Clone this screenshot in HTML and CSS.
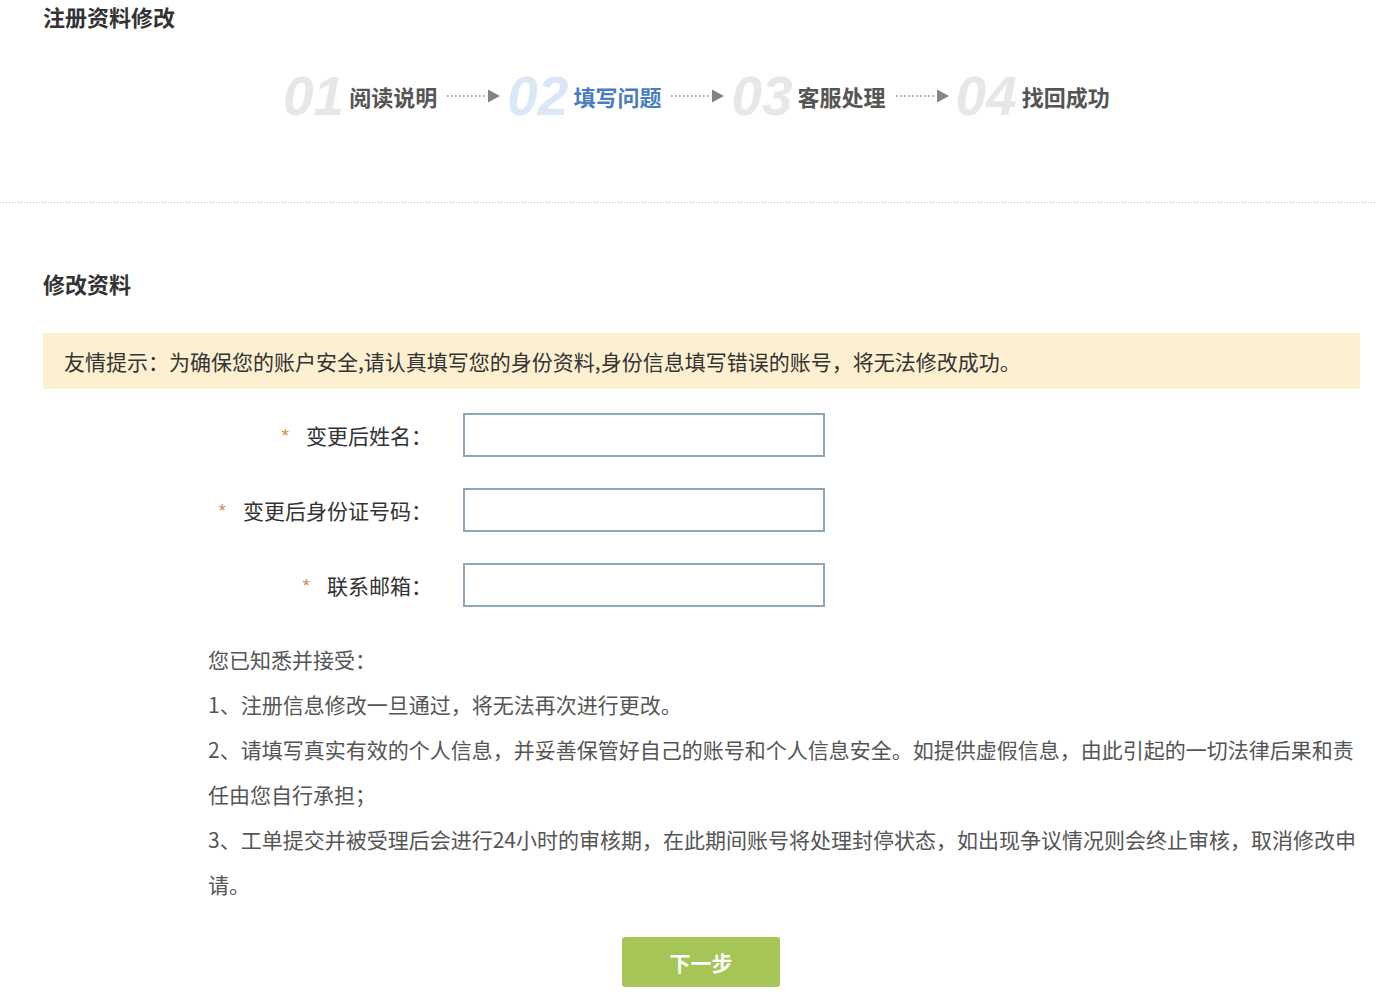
FILE: index.html
```html
<!DOCTYPE html>
<html lang="zh-CN">
<head>
<meta charset="utf-8">
<title>注册资料修改</title>
<link rel="stylesheet" href="styles.css">
</head>
<body>
<div class="page">
  <h1 class="page-title">注册资料修改</h1>

  <div class="steps">
    <div class="step">
      <span class="step-num">01</span>
      <span class="step-label">阅读说明</span>
      <svg class="step-arrow" width="53" height="14" viewBox="0 0 53 14"><line x1="0" y1="7" x2="40" y2="7" stroke="#8f8f8f" stroke-width="1.4" stroke-dasharray="1.6 2.4"/><polygon points="41,0.5 53,7 41,13.5" fill="#858585"/></svg>
    </div>
    <div class="step step-active">
      <span class="step-num">02</span>
      <span class="step-label">填写问题</span>
      <svg class="step-arrow" width="53" height="14" viewBox="0 0 53 14"><line x1="0" y1="7" x2="40" y2="7" stroke="#8f8f8f" stroke-width="1.4" stroke-dasharray="1.6 2.4"/><polygon points="41,0.5 53,7 41,13.5" fill="#858585"/></svg>
    </div>
    <div class="step">
      <span class="step-num">03</span>
      <span class="step-label">客服处理</span>
      <svg class="step-arrow" width="53" height="14" viewBox="0 0 53 14"><line x1="0" y1="7" x2="40" y2="7" stroke="#8f8f8f" stroke-width="1.4" stroke-dasharray="1.6 2.4"/><polygon points="41,0.5 53,7 41,13.5" fill="#858585"/></svg>
    </div>
    <div class="step">
      <span class="step-num">04</span>
      <span class="step-label">找回成功</span>
    </div>
  </div>

  <div class="separator"></div>

  <h2 class="section-title">修改资料</h2>

  <div class="notice">友情提示：为确保您的账户安全,请认真填写您的身份资料,身份信息填写错误的账号，将无法修改成功。</div>

  <form class="form">
    <div class="form-row">
      <label class="form-label"><span class="req">*</span>变更后姓名：</label>
      <input class="form-input" type="text">
    </div>
    <div class="form-row">
      <label class="form-label"><span class="req">*</span>变更后身份证号码：</label>
      <input class="form-input" type="text">
    </div>
    <div class="form-row">
      <label class="form-label"><span class="req">*</span>联系邮箱：</label>
      <input class="form-input" type="text">
    </div>
  </form>

  <div class="terms">
    <p>您已知悉并接受：</p>
    <p>1、注册信息修改一旦通过，将无法再次进行更改。</p>
    <p>2、请填写真实有效的个人信息，并妥善保管好自己的账号和个人信息安全。如提供虚假信息，由此引起的一切法律后果和责任由您自行承担；</p>
    <p>3、工单提交并被受理后会进行24小时的审核期，在此期间账号将处理封停状态，如出现争议情况则会终止审核，取消修改申请。</p>
  </div>

  <div class="actions">
    <button class="btn-next" type="button">下一步</button>
  </div>
</div>
</body>
</html>
```

FILE: styles.css
```css
html, body {
  margin: 0;
  padding: 0;
  background: #ffffff;
}

body {
  font-family: "Noto Sans CJK SC", "Noto Sans", "Liberation Sans", sans-serif;
  color: #333333;
}

.page {
  width: 1377px;
}

.page-title {
  margin: 0;
  padding-left: 43px;
  font-size: 22px;
  line-height: 32px;
  font-weight: 700;
  color: #333333;
}

.steps {
  display: flex;
  align-items: center;
  height: 60px;
  margin-top: 34px;
  padding-left: 283px;
}

.step {
  display: flex;
  align-items: center;
}

.step-num {
  font-family: "Liberation Sans", "DejaVu Sans", sans-serif;
  font-style: italic;
  font-weight: 700;
  font-size: 55px;
  line-height: 60px;
  color: #e7e7e7;
  margin-right: 5px;
}

.step-label {
  font-size: 22px;
  font-weight: 700;
  color: #555555;
  line-height: 30px;
}

.step-active .step-num {
  color: #dbe7f6;
}

.step-active .step-label {
  color: #4a7dbf;
}

.step-arrow {
  display: block;
  margin-left: 10px;
  margin-right: 7px;
}

.separator {
  height: 1px;
  margin-top: 76px;
  background-image: linear-gradient(to right, #b8b8b8 1px, transparent 1px);
  background-size: 3px 1px;
}

.section-title {
  margin: 62px 0 0;
  padding-left: 43px;
  font-size: 22px;
  line-height: 36px;
  font-weight: 700;
  color: #333333;
}

.notice {
  margin: 32px 17px 0 43px;
  height: 56px;
  line-height: 56px;
  padding-left: 21px;
  background: #fdf0d0;
  font-size: 21px;
  color: #333333;
  white-space: nowrap;
}

.form {
  margin: 24px 0 0;
  padding-left: 208px;
  display: flex;
  flex-direction: column;
  gap: 31px;
}

.form-row {
  display: flex;
  align-items: center;
}

.form-label {
  width: 224px;
  text-align: right;
  font-size: 21px;
  color: #333333;
  margin-right: 31px;
  white-space: nowrap;
}

.req {
  display: inline-block;
  font-family: "Liberation Sans", sans-serif;
  font-size: 19px;
  color: #cc8a4c;
  margin-right: 17px;
  vertical-align: 2px;
}

.form-input {
  box-sizing: border-box;
  width: 362px;
  height: 44px;
  border: 2px solid #8fa6ba;
  border-radius: 0;
  background: #ffffff;
  padding: 0 8px;
  font-size: 18px;
  outline: none;
}

.terms {
  margin-top: 30px;
  padding-left: 208px;
  width: 1152px;
  font-size: 21px;
  line-height: 45px;
  color: #555555;
}

.terms p {
  margin: 0;
}

.actions {
  margin-top: 30px;
  padding-left: 622px;
}

.btn-next {
  width: 158px;
  height: 50px;
  border: none;
  border-radius: 3px;
  background: #a5c556;
  color: #ffffff;
  font-family: "Noto Sans CJK SC", sans-serif;
  font-size: 21px;
  font-weight: 700;
  cursor: pointer;
}
```
